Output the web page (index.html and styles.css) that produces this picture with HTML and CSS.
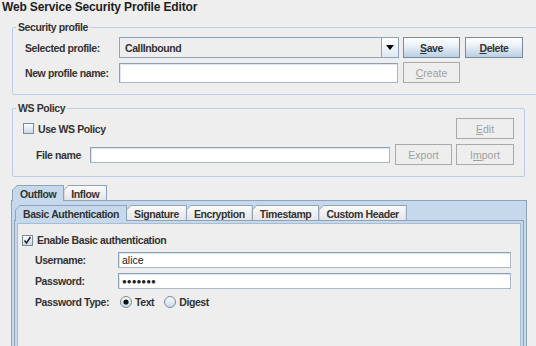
FILE: index.html
```html
<!DOCTYPE html>
<html>
<head>
<meta charset="utf-8">
<link rel="stylesheet" href="styles.css">
</head>
<body>
<div class="page">
  <div class="title">Web Service Security Profile Editor</div>

  <div class="group g-profile">
    <span class="legend">Security profile</span>
    <div class="row">
      <span class="lbl">Selected profile:</span>
      <div class="combo">
        <span class="combo-val">CallInbound</span>
        <span class="combo-btn"><svg width="8" height="5" viewBox="0 0 8 5"><path d="M0 0h8L4 5z" fill="#000"/></svg></span>
      </div>
      <span class="btn b-save"><u>S</u>ave</span>
      <span class="btn b-delete"><u>D</u>elete</span>
    </div>
    <div class="row r2">
      <span class="lbl">New profile name:</span>
      <span class="field f-newname"></span>
      <span class="btn disabled b-create"><u>C</u>reate</span>
    </div>
  </div>

  <div class="group g-policy">
    <span class="legend">WS Policy</span>
    <div class="row between">
      <span class="check"><svg width="11" height="11" viewBox="0 0 11 11"><defs><linearGradient id="cg" x1="0" y1="0" x2="0" y2="1"><stop offset="0" stop-color="#ffffff"/><stop offset="1" stop-color="#c7d6e6"/></linearGradient></defs><rect x="0.5" y="0.5" width="10" height="10" fill="url(#cg)" stroke="#7a8a99"/></svg>Use WS Policy</span>
      <span class="btn disabled b-edit"><u>E</u>dit</span>
    </div>
    <div class="row r2">
      <span class="lbl lbl-file">File name</span>
      <span class="field f-file"></span>
      <span class="btn disabled b-export">Export</span>
      <span class="btn disabled b-import">I<u>m</u>port</span>
    </div>
  </div>

  <div class="tabpane">
    <div class="tabs">
      <span class="tab sel"><span class="tab-in">Outflow</span></span>
      <span class="tab"><span class="tab-in">Inflow</span></span>
    </div>
    <div class="outer-body">
      <div class="tabs inner-tabs">
        <span class="tab sel"><span class="tab-in">Basic Authentication</span></span>
        <span class="tab"><span class="tab-in">Signature</span></span>
        <span class="tab"><span class="tab-in">Encryption</span></span>
        <span class="tab"><span class="tab-in">Timestamp</span></span>
        <span class="tab"><span class="tab-in">Custom Header</span></span>
      </div>
      <div class="inner-body">
        <div class="content">
          <div class="crow">
            <span class="check"><svg width="11" height="11" viewBox="0 0 11 11"><defs><linearGradient id="cg2" x1="0" y1="0" x2="0" y2="1"><stop offset="0" stop-color="#ffffff"/><stop offset="1" stop-color="#c7d6e6"/></linearGradient></defs><rect x="0.5" y="0.5" width="10" height="10" fill="url(#cg2)" stroke="#7a8a99"/><path d="M2.5 5.5l2 2.5 4-6" fill="none" stroke="#222" stroke-width="1.5"/></svg>Enable Basic authentication</span>
          </div>
          <div class="crow frow">
            <span class="lbl lbl-in">Username:</span>
            <span class="field f-wide">alice</span>
          </div>
          <div class="crow frow">
            <span class="lbl lbl-in">Password:</span>
            <span class="field f-wide dots">&#9679;&#9679;&#9679;&#9679;&#9679;&#9679;&#9679;</span>
          </div>
          <div class="crow frow">
            <span class="lbl lbl-in">Password Type:</span>
            <span class="radio"><svg width="12" height="12" viewBox="0 0 12 12"><defs><linearGradient id="rg" x1="0" y1="0" x2="0" y2="1"><stop offset="0" stop-color="#ffffff"/><stop offset="1" stop-color="#c7d6e6"/></linearGradient></defs><circle cx="6" cy="6" r="5.5" fill="url(#rg)" stroke="#7a8a99"/><circle cx="6" cy="6" r="2.6" fill="#111"/></svg>Text</span>
            <span class="radio r-digest"><svg width="12" height="12" viewBox="0 0 12 12"><defs><linearGradient id="rg2" x1="0" y1="0" x2="0" y2="1"><stop offset="0" stop-color="#ffffff"/><stop offset="1" stop-color="#c7d6e6"/></linearGradient></defs><circle cx="6" cy="6" r="5.5" fill="url(#rg2)" stroke="#7a8a99"/></svg>Digest</span>
          </div>
        </div>
      </div>
    </div>
  </div>
</div>
</body>
</html>
```

FILE: styles.css
```css
body {
  margin: 0;
  background: #eeeeee;
  color: #333333;
  font-family: "Liberation Sans", Arial, sans-serif;
  font-weight: bold;
  font-size: 10.5px;
  letter-spacing: -0.4px;
  white-space: nowrap;
}
.page {
  width: 536px;
  height: 346px;
  overflow: hidden;
  position: relative;
}
.title {
  height: 17px;
  line-height: 15px;
  padding-left: 2px;
  font-size: 12px;
  letter-spacing: -0.15px;
  color: #1e1e1e;
}
.group {
  position: relative;
  border: 1px solid #b8cfe5;
  border-radius: 2px;
  margin-left: 12px;
}
.legend {
  position: absolute;
  top: -8px;
  left: 3px;
  padding: 0 2px;
  background: #eeeeee;
  line-height: 14px;
}
.g-profile {
  margin-top: 10px;
  width: 540px;
  padding: 9px 0 11px 12px;
}
.g-policy {
  margin-top: 13px;
  width: 491px;
  padding: 9px 10px 11px 10px;
}
.row {
  display: flex;
  align-items: center;
  height: 21px;
}
.row.r2 { margin-top: 4px; }
.g-policy .row.r2 { margin-top: 5px; }
.row.between { justify-content: space-between; }
.lbl {
  width: 94px;
  flex: none;
}
.lbl-file {
  width: 54px;
  margin-left: 13px;
}
.combo {
  width: 280px;
  height: 21px;
  box-sizing: border-box;
  border: 1px solid #8ea4ba;
  background: #eeeeee;
  display: flex;
  align-items: center;
  flex: none;
}
.combo-val {
  flex: 1;
  padding-left: 5px;
  color: #333;
}
.combo-btn {
  width: 16px;
  height: 19px;
  border-left: 1px solid #8ea4ba;
  background: linear-gradient(#ffffff, #dfe8f2);
  display: flex;
  align-items: center;
  justify-content: center;
}
.btn {
  flex: none;
  box-sizing: border-box;
  height: 21px;
  border: 1px solid #7a8a99;
  background: linear-gradient(#ffffff 0%, #eef3f8 35%, #b8cfe5 100%);
  display: flex;
  align-items: center;
  justify-content: center;
  color: #333;
}
.btn.disabled {
  border-color: #a9a9a9;
  background: #eeeeee;
  color: #a0a0a0;
  font-weight: normal;
  letter-spacing: 0;
}
.b-save { width: 57px; margin-left: 4px; }
.b-delete { width: 58px; margin-left: 5px; }
.b-create { width: 57px; margin-left: 5px; }
.b-edit { width: 58px; }
.b-export { width: 57px; margin-left: 5px; }
.b-import { width: 58px; margin-left: 4px; }
.field {
  flex: none;
  box-sizing: border-box;
  background: #ffffff;
  border: 1px solid #a7b8ca;
  border-top-color: #8ea0b3;
  border-left-color: #8ea0b3;
  box-shadow: inset 1px 1px 0 #dde6ef;
  display: flex;
  align-items: center;
  padding-left: 3px;
  font-weight: normal;
  letter-spacing: 0;
  color: #222;
}
.f-newname { width: 279px; height: 20px; }
.f-file { width: 300px; height: 16px; }
.check {
  display: flex;
  align-items: center;
  gap: 4px;
}
.tabpane {
  margin: 8px 0 0 11px;
  width: 516px;
}
.tabs {
  display: flex;
  height: 15px;
  align-items: flex-end;
  padding-left: 1px;
}
.tab {
  position: relative;
  box-sizing: border-box;
  background: #8fa3b8;
  clip-path: polygon(0 5px, 5px 0, 100% 0, 100% 100%, 0 100%);
  padding: 1px 1px 0 1px;
  margin-right: -1px;
  margin-bottom: -1px;
  height: 16px;
}
.tab-in {
  display: flex;
  align-items: center;
  height: 15px;
  padding: 0 7px 0 7px;
  background: linear-gradient(#fbfbfb, #e4e4e4);
  clip-path: polygon(0 4px, 4px 0, 100% 0, 100% 100%, 0 100%);
}
.tab.sel { z-index: 2; }
.tab.sel .tab-in {
  background: #c6d9ec;
  height: 16px;
}
.outer-body {
  position: relative;
  z-index: 1;
  border: 1px solid #8fa3b8;
  background: #c6d9ec;
  padding: 4px 2px 0 2px;
  height: 160px;
}
.inner-tabs {
  padding-left: 1px;
}
.inner-body {
  position: relative;
  z-index: 1;
  border: 1px solid #8fa3b8;
  background: #c6d9ec;
  padding: 2px 2px 0 2px;
  height: 140px;
}
.content {
  background: #eeeeee;
  height: 140px;
  padding-top: 8px;
  border: 1px solid #a9bdd2;
  border-bottom: none;
}
.crow {
  display: flex;
  align-items: center;
  height: 16px;
  padding-left: 4px;
}
.crow.frow {
  margin-top: 5px;
  padding-left: 17px;
}
.crow + .crow.frow:nth-child(2) { margin-top: 4px; }
.lbl-in { width: 83px; }
.f-wide {
  width: 393px;
  height: 16px;
}
.dots {
  font-size: 8px;
}
.radio {
  display: flex;
  align-items: center;
  gap: 3px;
  margin-left: 2px;
}
.r-digest { margin-left: 10px; }
```
